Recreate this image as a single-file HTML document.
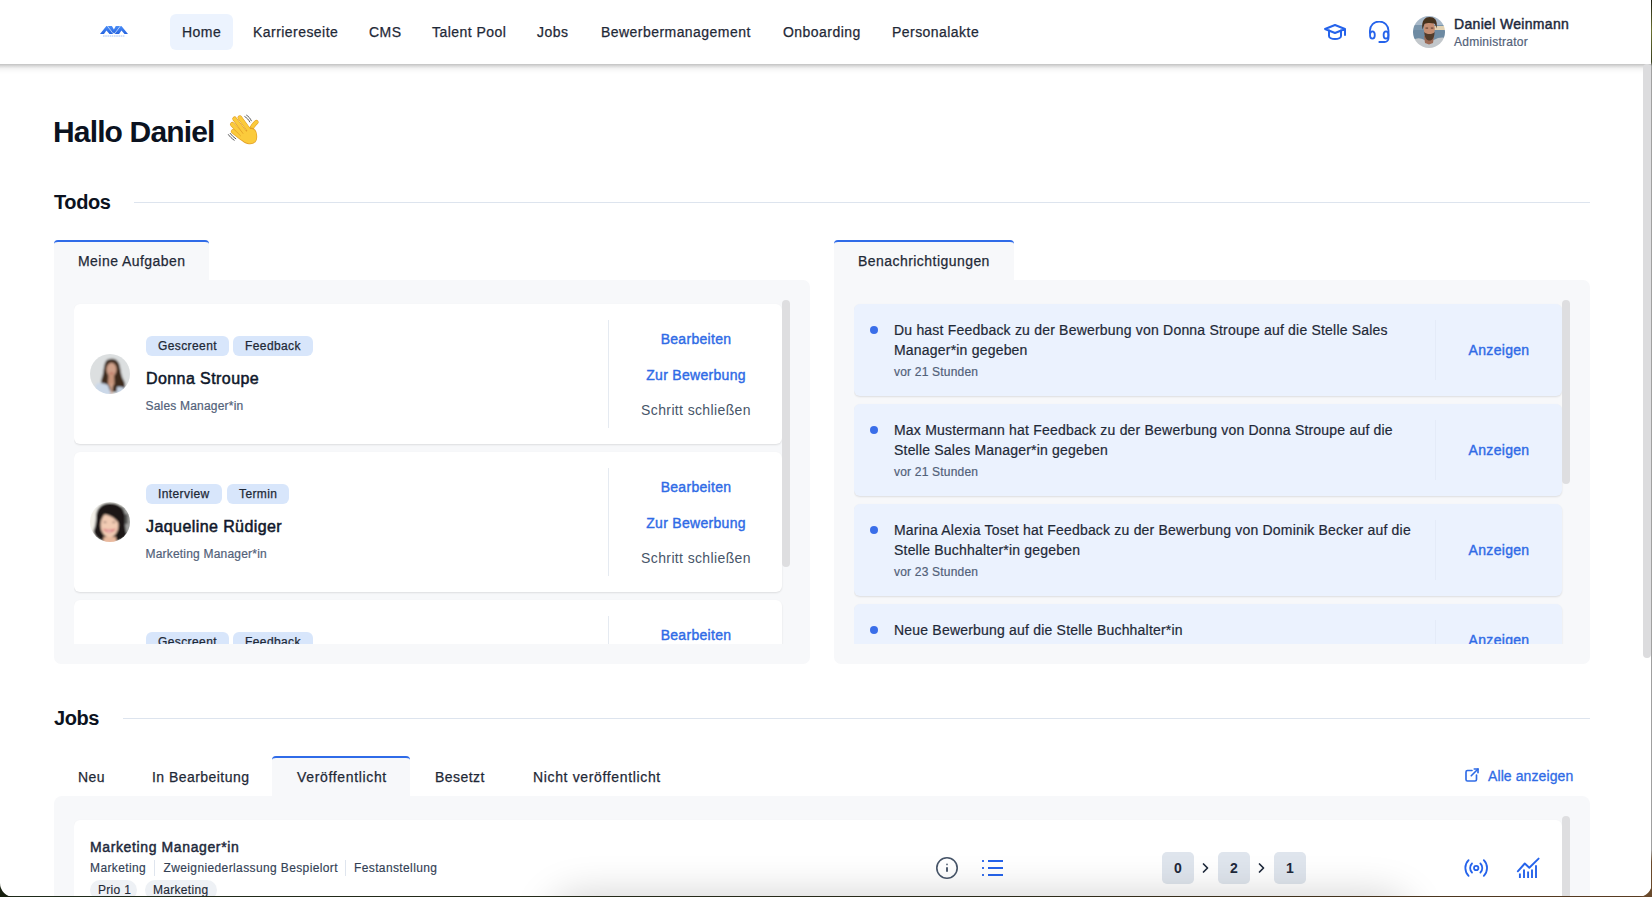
<!DOCTYPE html>
<html><head><meta charset="utf-8">
<style>
*{box-sizing:border-box;margin:0;padding:0}
html,body{width:1652px;height:897px;overflow:hidden;background:#fff}
body{position:relative;font-family:"Liberation Sans",sans-serif;color:#1e293b}
.abs{position:absolute}
.t{position:absolute;white-space:nowrap;line-height:1}
/* header */
#hdr{position:absolute;left:0;top:0;width:1651px;height:64px;background:#fff;z-index:5}
#hsh{position:absolute;left:0;top:64px;width:1651px;height:10px;z-index:5;background:linear-gradient(180deg,rgba(0,0,0,.24) 0,rgba(0,0,0,.17) 1.5px,rgba(0,0,0,.1) 3px,rgba(0,0,0,.05) 4.5px,rgba(0,0,0,.025) 6.5px,rgba(0,0,0,.01) 8px,rgba(0,0,0,0) 10px)}
.nav{position:absolute;top:14px;height:36px;font-size:14px;color:#1f2937;line-height:36px;padding:0 12px;border-radius:6px;letter-spacing:.45px;white-space:nowrap;-webkit-text-stroke:.25px #1f2937}
.nav.on{background:#ecf3fe}
/* headings */
.h2{position:absolute;font-size:20px;font-weight:700;color:#0b1220;letter-spacing:-.4px;line-height:1}
.rule{position:absolute;height:1px;background:#dde4ee}
/* tabs */
.tab{position:absolute;height:40px;font-size:14px;color:#1f2937;line-height:42px;letter-spacing:.45px;white-space:nowrap;-webkit-text-stroke:.25px #1f2937}
.tab.on{background:#f7f8fa;border-top:2px solid #2f6be8;border-radius:4px 4px 0 0;line-height:39px}
.panel{position:absolute;background:#f7f8fa;border-radius:0 7px 7px 7px}
.clip{position:absolute;overflow:hidden}
.card{position:absolute;background:#fff;border-radius:6px;box-shadow:0 1px 2px rgba(0,0,0,.11)}
.sb{position:absolute;width:8px;background:#dedee0;border-radius:4px}
.badge{position:absolute;height:20px;border-radius:6px;background:#d8e6fb;font-size:12px;line-height:20px;color:#1f2937;padding:0 12px;white-space:nowrap;letter-spacing:.4px;-webkit-text-stroke:.25px #1f2937}
.name{position:absolute;font-size:16px;font-weight:400;color:#0f172a;white-space:nowrap;line-height:1;letter-spacing:.42px;-webkit-text-stroke:.5px #0f172a}
.sub{position:absolute;font-size:12px;color:#526179;white-space:nowrap;line-height:1;letter-spacing:.2px;-webkit-text-stroke:.2px #526179}
.vdiv{position:absolute;width:1px;background:#e5eaf1}
.act{position:absolute;font-size:14px;white-space:nowrap;line-height:1;text-align:center;width:174px}
.blue{color:#2f6be6;font-weight:400;letter-spacing:.3px;-webkit-text-stroke:.4px #2f6be6}
.gray{color:#475569;letter-spacing:.37px}
.notif{position:absolute;background:#ebf2fe;border-radius:6px;box-shadow:0 1px 2px rgba(0,0,0,.11)}
.dot{position:absolute;width:8px;height:8px;border-radius:50%;background:#3a6ee9}
.ntext{position:absolute;font-size:14px;color:#1f2937;line-height:20px;white-space:nowrap;letter-spacing:.2px;-webkit-text-stroke:.2px #1f2937}
.ntime{position:absolute;font-size:12px;color:#526179;white-space:nowrap;line-height:1;letter-spacing:.2px;-webkit-text-stroke:.2px #526179}
</style></head>
<body>

<div id="hsh"></div>
<div id="hdr">
  <svg class="abs" style="left:100px;top:26px" width="29" height="12" viewBox="0 0 29 12">
    <defs><linearGradient id="lg" x1="0" y1="0" x2="0" y2="1"><stop offset="0" stop-color="#4b8ef7"/><stop offset="1" stop-color="#2563e0"/></linearGradient></defs>
    <path d="M0 8 L6.4 0 L11.9 0 L13.9 3.4 L15.8 0 L21.4 0 L28 8 L24.5 8 L21.4 4.6 L19.1 8 L15 8 L13.9 6.4 L12.9 8 L9.5 8 L6.4 4.6 L4 8Z" fill="url(#lg)"/>
    <path d="M7.4 0 L13.2 7.8 M20.4 0 L14.6 7.8" stroke="#fff" stroke-width=".7" opacity=".85"/>
    <path d="M3 10 H25" stroke="#8db2f2" stroke-width="1.2" stroke-dasharray="1.6 .6" opacity=".8"/>
  </svg>
  <div class="nav on" style="left:170px">Home</div>
  <div class="nav" style="left:241px">Karriereseite</div>
  <div class="nav" style="left:357px">CMS</div>
  <div class="nav" style="left:420px">Talent Pool</div>
  <div class="nav" style="left:525px">Jobs</div>
  <div class="nav" style="left:589px">Bewerbermanagement</div>
  <div class="nav" style="left:771px">Onboarding</div>
  <div class="nav" style="left:880px">Personalakte</div>
</div>

<!-- title -->
<div class="t" style="left:53px;top:116.5px;font-size:30px;font-weight:700;color:#0b1220;letter-spacing:-.85px">Hallo Daniel</div>

<!-- Todos -->
<div class="h2" style="left:54px;top:192px">Todos</div>
<div class="rule" style="left:134px;top:202px;width:1456px"></div>

<div class="tab on" style="left:54px;top:240px;width:155px;padding-left:24px">Meine Aufgaben</div>
<div class="panel" style="left:54px;top:280px;width:756px;height:384px"></div>

<div class="tab on" style="left:834px;top:240px;width:180px;padding-left:24px">Benachrichtigungen</div>
<div class="panel" style="left:834px;top:280px;width:756px;height:384px"></div>


<!-- header right -->
<svg class="abs" style="left:1323px;top:20px;z-index:6" width="24" height="24" viewBox="0 0 24 24" fill="none" stroke="#2563eb" stroke-width="2" stroke-linecap="round" stroke-linejoin="round"><path d="M22 9l-10 -4l-10 4l10 4l10 -4v6"/><path d="M6 10.6v5.4a6 3 0 0 0 12 0v-5.4"/></svg>
<svg class="abs" style="left:1367px;top:21px;z-index:6" width="24" height="24" viewBox="0 0 24 24" fill="none" stroke="#2563eb" stroke-width="1.8" stroke-linecap="round" stroke-linejoin="round"><path d="M2.9 12v-2.2a9.3 9.3 0 0 1 18.6 0v7.2a4 4 0 0 1 -4 4h-5.2"/><ellipse cx="5.4" cy="14" rx="2.4" ry="3.6"/><ellipse cx="19" cy="14" rx="2.4" ry="3.6"/></svg>
<svg class="abs" style="left:1413px;top:16px;z-index:6" width="32" height="32" viewBox="0 0 32 32">
  <defs><clipPath id="cd"><circle cx="16" cy="16" r="16"/></clipPath><filter id="bd" x="-20%" y="-20%" width="140%" height="140%"><feGaussianBlur stdDeviation="0.5"/></filter></defs>
  <g clip-path="url(#cd)"><g filter="url(#bd)">
    <rect x="-2" y="-2" width="36" height="36" fill="#7a95ab"/>
    <rect x="-2" y="-2" width="36" height="11" fill="#a7b8c8"/>
    <rect x="18" y="10" width="16" height="4" fill="#e2d2b2"/>
    <rect x="-2" y="14" width="36" height="9" fill="#6d8aa2"/>
    <path d="M-2 25 C4 21 8 22 11 24 L21 24 C25 21 30 21 34 22 L34 34 L-2 34Z" fill="#c2c7cb"/>
    <path d="M11 20 L21 20 L20 27 L16 28.5 L12 27Z" fill="#9c6a55"/>
    <ellipse cx="16.3" cy="12.5" rx="5.6" ry="8" fill="#c48e72"/>
    <path d="M9.5 13.5 C8 4 12.5 1 16.5 1 C21.5 1 25 4 23.5 12.5 C22.8 9.5 22.2 8 21 7.5 C18 6.8 14 6.8 11.8 7.8 C11 9 10.4 11 9.5 13.5Z" fill="#45301f"/>
    <path d="M11.3 16 C11.5 22 13.8 24.5 16.5 24.5 C19.2 24.5 21.5 22 21.6 16 C19.5 18.8 13.5 18.8 11.3 16Z" fill="#513a2c"/>
    <rect x="12.5" y="11.5" width="2.6" height="1.2" fill="#6b4634"/><rect x="17.8" y="11.5" width="2.6" height="1.2" fill="#6b4634"/>
  </g></g>
</svg>
<div class="t" style="left:1454px;top:17px;font-size:14px;font-weight:400;color:#1e293b;z-index:6;letter-spacing:.33px;-webkit-text-stroke:.45px #1e293b">Daniel Weinmann</div>
<div class="t" style="left:1454px;top:35.5px;font-size:12px;color:#526179;z-index:6;letter-spacing:.25px;-webkit-text-stroke:.2px #526179">Administrator</div>

<!-- wave emoji -->
<svg class="abs" style="left:222px;top:108px" width="42" height="42" viewBox="0 0 42 42" stroke-linecap="round" stroke-linejoin="round">
  <path d="M34.3 14.2 C32 16 30 19 28.5 22.5" stroke="#e3a028" stroke-width="4.5" fill="none"/>
  <path d="M34.3 14.2 C32 16 30 19 28.5 22.5" stroke="#fbcb3c" stroke-width="3.4" fill="none"/>
  <path d="M17 25 L28 19.5 C33 19 35.2 24 35.2 29 C35.2 34 31.5 36.8 27 36.3 C22.5 35.8 19 32.5 15.5 28Z" fill="#e3a028"/>
  <path d="M11.2 23.4 L19.5 30" stroke="#e3a028" stroke-width="4.6" fill="none"/><path d="M11.2 23.4 L19.5 30" stroke="#fbcb3c" stroke-width="3.5" fill="none"/>
  <path d="M10.3 16.3 L20.5 27" stroke="#e3a028" stroke-width="4.6" fill="none"/><path d="M10.3 16.3 L20.5 27" stroke="#fbcb3c" stroke-width="3.5" fill="none"/>
  <path d="M12.6 10.8 L22.5 24" stroke="#e3a028" stroke-width="4.6" fill="none"/><path d="M12.6 10.8 L22.5 24" stroke="#fbcb3c" stroke-width="3.5" fill="none"/>
  <path d="M17.8 9.6 L26.5 21.5" stroke="#e3a028" stroke-width="4.6" fill="none"/><path d="M17.8 9.6 L26.5 21.5" stroke="#fbcb3c" stroke-width="3.5" fill="none"/>
  <path d="M19 27 L28.5 21 C32.5 20.5 34.5 24 34.5 29 C34.5 33.5 31 36 27 35.5 C23.5 35 21 33 18.5 30.5Z" fill="#fbcb3c"/>
  <path d="M22.8 8.6 C24.8 9.8 26.6 11.6 27.8 14" stroke="#5a5a5a" stroke-width="1" fill="none"/>
  <path d="M24.6 7.2 C26.6 8.5 28.4 10.4 29.3 12.8" stroke="#5a5a5a" stroke-width="1" fill="none"/>
  <path d="M6.4 26.6 C7.8 28.6 9.8 30.6 12.2 32.2" stroke="#5a5a5a" stroke-width="1" fill="none"/>
  <path d="M8.2 25.4 C9.6 27.4 11.6 29.4 13.8 30.8" stroke="#5a5a5a" stroke-width="1" fill="none"/>
</svg>

<!-- Aufgaben list -->
<div class="clip" style="left:74px;top:300px;width:716px;height:344px">
  <!-- card 1 -->
  <div class="card" style="left:0;top:4px;width:708px;height:140px"></div>
  <div class="card" style="left:0;top:152px;width:708px;height:140px"></div>
  <div class="card" style="left:0;top:300px;width:708px;height:140px"></div>
  <div class="sb" style="left:708px;top:0;height:267px"></div>
</div>
<div class="clip" style="left:74px;top:300px;width:708px;height:344px">
  <!-- card 1 content (origin card top-left = 0,4) -->
  <svg class="abs" style="left:16px;top:54px" width="40" height="40" viewBox="0 0 40 40">
  <defs><clipPath id="c1"><circle cx="20" cy="20" r="20"/></clipPath><filter id="b1" x="-20%" y="-20%" width="140%" height="140%"><feGaussianBlur stdDeviation="0.8"/></filter></defs>
  <g clip-path="url(#c1)"><g filter="url(#b1)">
    <rect x="-2" y="-2" width="44" height="44" fill="#dcdfe0"/>
    <path d="M17 6 C22 3.5 28 5 29.5 11 C31 17 31 22 34 27 C36 31 35.5 36 31 38 L22 38 L14 36 C10 33 10.5 27 12.5 22 C14 17 13.5 9 17 6Z" fill="#3e2a1f"/>
    <ellipse cx="21.5" cy="15.5" rx="5" ry="6.8" fill="#d0a18a"/>
    <path d="M18.5 20 L24 20 L24.5 30 L21 34 L18 30Z" fill="#c8957c"/>
    <path d="M19.5 18.8 Q21.5 20 23.5 18.8" stroke="#b7524a" stroke-width="1" fill="none"/>
    <path d="M6 30 C10 28 14 29 18 31 L22 42 L4 42Z" fill="#cbd8e8"/>
    <path d="M27 33 C30 32 34 33 37 36 L38 42 L26 42Z" fill="#c6d3e3"/>
    <path d="M20 30 L23 30 L22 42 L21 42Z" fill="#d4a890"/>
  </g></g>
</svg>
<div class="badge" style="left:72px;top:36px">Gescreent</div>
  <div class="badge" style="left:159px;top:36px">Feedback</div>
  <div class="name" style="left:72px;top:70.8px">Donna Stroupe</div>
  <div class="sub" style="left:71.5px;top:99.5px">Sales Manager*in</div>
  <div class="vdiv" style="left:534px;top:20px;height:108px"></div>
  <div class="act blue" style="left:535px;top:31.7px">Bearbeiten</div>
  <div class="act blue" style="left:535px;top:67.5px">Zur Bewerbung</div>
  <div class="act gray" style="left:535px;top:103.2px">Schritt schließen</div>

  <!-- card 2 content (+148) -->
  <svg class="abs" style="left:16px;top:202px" width="40" height="40" viewBox="0 0 40 40">
  <defs><clipPath id="c2"><circle cx="20" cy="20" r="20"/></clipPath><filter id="b2" x="-20%" y="-20%" width="140%" height="140%"><feGaussianBlur stdDeviation="0.9"/></filter></defs>
  <g clip-path="url(#c2)"><g filter="url(#b2)">
    <rect x="-2" y="-2" width="44" height="44" fill="#ecebe6"/>
    <rect x="31" y="4" width="11" height="34" fill="#a4a5a3"/>
    <rect x="33" y="12" width="5" height="10" fill="#5a5a58"/>
    <rect x="-2" y="8" width="8" height="26" fill="#f4f1ea"/>
    <path d="M6 16 C6 5 13 1 20 1 C28 1 35 5 35 15 C35 22 35 28 37 33 C34 37 30 39 26 39 L13 39 C8 38 4 34 3.5 29 C5 25 6 21 6 16Z" fill="#1d1816"/>
    <ellipse cx="19.5" cy="23" rx="9" ry="12.5" fill="#f2cbb3"/>
    <path d="M9.5 13 C11 7 17 5 22 6 C27 7 30 11 30 17 L30 24 C28 19 24 15.5 19 13.5 C15 12 11.5 12 9.5 13Z" fill="#1d1816"/>
    <path d="M14.3 27.6 Q19.3 33 24.5 27.6 Q19.3 29.2 14.3 27.6Z" fill="#fff" stroke="#d9737b" stroke-width="1.1"/>
    <ellipse cx="15" cy="20.3" rx="1.6" ry=".7" fill="#8a6a60"/><ellipse cx="23.8" cy="20.3" rx="1.6" ry=".7" fill="#8a6a60"/>
    <path d="M13.5 35 L26 35 L26.5 42 L13 42Z" fill="#e9b99e"/>
  </g></g>
</svg>
<div class="badge" style="left:72px;top:184px">Interview</div>
  <div class="badge" style="left:153px;top:184px">Termin</div>
  <div class="name" style="left:72px;top:218.8px">Jaqueline Rüdiger</div>
  <div class="sub" style="left:71.5px;top:247.5px">Marketing Manager*in</div>
  <div class="vdiv" style="left:534px;top:168px;height:108px"></div>
  <div class="act blue" style="left:535px;top:179.7px">Bearbeiten</div>
  <div class="act blue" style="left:535px;top:215.5px">Zur Bewerbung</div>
  <div class="act gray" style="left:535px;top:251.2px">Schritt schließen</div>

  <!-- card 3 content (+296) -->
  <div class="badge" style="left:72px;top:332px">Gescreent</div>
  <div class="badge" style="left:159px;top:332px">Feedback</div>
  <div class="vdiv" style="left:534px;top:316px;height:108px"></div>
  <div class="act blue" style="left:535px;top:327.7px">Bearbeiten</div>
</div>

<!-- notifications -->
<div class="clip" style="left:854px;top:300px;width:716px;height:344px">
  <div class="notif" style="left:0;top:4px;width:708px;height:92px"></div>
  <div class="notif" style="left:0;top:104px;width:708px;height:92px"></div>
  <div class="notif" style="left:0;top:204px;width:708px;height:92px"></div>
  <div class="notif" style="left:0;top:304px;width:708px;height:72px"></div>
  <div class="sb" style="left:708px;top:0;height:184px"></div>

  <div class="dot" style="left:16px;top:26px"></div>
  <div class="ntext" style="left:40px;top:20.4px">Du hast Feedback zu der Bewerbung von Donna Stroupe auf die Stelle Sales<br>Manager*in gegeben</div>
  <div class="ntime" style="left:40px;top:65.8px">vor 21 Stunden</div>
  <div class="vdiv" style="left:581px;top:20px;height:60px;background:#e4ebf8"></div>
  <div class="act blue" style="left:582px;top:43.3px;width:126px">Anzeigen</div>

  <div class="dot" style="left:16px;top:126px"></div>
  <div class="ntext" style="left:40px;top:120.4px">Max Mustermann hat Feedback zu der Bewerbung von Donna Stroupe auf die<br>Stelle Sales Manager*in gegeben</div>
  <div class="ntime" style="left:40px;top:165.8px">vor 21 Stunden</div>
  <div class="vdiv" style="left:581px;top:120px;height:60px;background:#e4ebf8"></div>
  <div class="act blue" style="left:582px;top:143.3px;width:126px">Anzeigen</div>

  <div class="dot" style="left:16px;top:226px"></div>
  <div class="ntext" style="left:40px;top:220.4px">Marina Alexia Toset hat Feedback zu der Bewerbung von Dominik Becker auf die<br>Stelle Buchhalter*in gegeben</div>
  <div class="ntime" style="left:40px;top:265.8px">vor 23 Stunden</div>
  <div class="vdiv" style="left:581px;top:220px;height:60px;background:#e4ebf8"></div>
  <div class="act blue" style="left:582px;top:243.3px;width:126px">Anzeigen</div>

  <div class="dot" style="left:16px;top:326px"></div>
  <div class="ntext" style="left:40px;top:320.4px">Neue Bewerbung auf die Stelle Buchhalter*in</div>
  <div class="vdiv" style="left:581px;top:320px;height:40px;background:#e4ebf8"></div>
  <div class="act blue" style="left:582px;top:333.3px;width:126px">Anzeigen</div>
</div>

<!-- Jobs -->
<div class="h2" style="left:54px;top:708px">Jobs</div>
<div class="rule" style="left:123px;top:718px;width:1467px"></div>


<div class="tab" style="left:54px;top:756px;width:74px;padding-left:24px">Neu</div>
<div class="tab" style="left:128px;top:756px;width:144px;padding-left:24px">In Bearbeitung</div>
<div class="tab on" style="left:272px;top:756px;width:138px;padding-left:25px;letter-spacing:.66px">Veröffentlicht</div>
<div class="tab" style="left:410px;top:756px;width:98px;padding-left:25px">Besetzt</div>
<div class="tab" style="left:508px;top:756px;width:176px;padding-left:25px;letter-spacing:.65px">Nicht veröffentlicht</div>

<svg class="abs" style="left:1463px;top:766px" width="18" height="18" viewBox="0 0 24 24" fill="none" stroke="#2f6be6" stroke-width="2.2" stroke-linecap="round" stroke-linejoin="round"><path d="M12 6h-6a2 2 0 0 0 -2 2v10a2 2 0 0 0 2 2h10a2 2 0 0 0 2 -2v-6"/><path d="M11 13l9 -9"/><path d="M15 4h5v5"/></svg>
<div class="t" style="left:1488px;top:769.4px;font-size:14px;color:#2f6be6;letter-spacing:.1px;-webkit-text-stroke:.3px #2f6be6">Alle anzeigen</div>

<div class="panel" style="left:54px;top:796px;width:1536px;height:140px;border-radius:8px"></div>
<div class="clip" style="left:74px;top:816px;width:1496px;height:100px">
  <div class="card" style="left:0;top:4px;width:1488px;height:120px"></div>
  <div class="sb" style="left:1488px;top:0;height:120px"></div>
  <div class="t" style="left:16px;top:23.7px;font-size:14px;font-weight:400;color:#1e293b;letter-spacing:.62px;-webkit-text-stroke:.45px #1e293b">Marketing Manager*in</div>
  <div class="t" style="left:16px;top:45.7px;font-size:12px;color:#334155;letter-spacing:.38px;-webkit-text-stroke:.15px #334155">Marketing</div>
  <div class="vdiv" style="left:80px;top:44px;height:16px;background:#dfe5ee"></div>
  <div class="t" style="left:89.5px;top:45.7px;font-size:12px;color:#334155;letter-spacing:.38px;-webkit-text-stroke:.15px #334155">Zweigniederlassung Bespielort</div>
  <div class="vdiv" style="left:271px;top:44px;height:16px;background:#dfe5ee"></div>
  <div class="t" style="left:280px;top:45.7px;font-size:12px;color:#334155;letter-spacing:.38px;-webkit-text-stroke:.15px #334155">Festanstellung</div>
  <div class="abs" style="left:16px;top:64px;width:47px;height:20px;border-radius:10px;background:#eef1f5;font-size:12px;line-height:20px;color:#1f2937;padding-left:8px;white-space:nowrap;letter-spacing:.3px;-webkit-text-stroke:.15px #1f2937">Prio 1</div>
  <div class="abs" style="left:71px;top:64px;width:72px;height:20px;border-radius:10px;background:#eef1f5;font-size:12px;line-height:20px;color:#1f2937;padding-left:8px;white-space:nowrap;letter-spacing:.3px;-webkit-text-stroke:.15px #1f2937">Marketing</div>

  <svg class="abs" style="left:861px;top:40px" width="24" height="24" viewBox="0 0 24 24" fill="none" stroke="#475569" stroke-width="1.6" stroke-linecap="round"><circle cx="12" cy="12" r="10.2"/><path d="M12 8.2v.4"/><path d="M12 11.2v4.6" stroke-width="1.9" stroke-linecap="butt"/></svg>
  <svg class="abs" style="left:906px;top:40px" width="24" height="24" viewBox="0 0 24 24" fill="none" stroke="#2563eb" stroke-width="1.8"><path d="M8 5h15M8 12h15M8 19h15"/><path d="M3 4.1v1.8M3 11.1v1.8M3 18.1v1.8"/></svg>

  <div class="abs" style="left:1088px;top:36px;width:32px;height:32px;border-radius:5px;background:#dfe5ed;font-size:14px;font-weight:700;color:#1e293b;text-align:center;line-height:32px">0</div>
  <svg class="abs" style="left:1126px;top:45px" width="12" height="14" viewBox="0 0 12 14" fill="none" stroke="#1e293b" stroke-width="1.7" stroke-linecap="round" stroke-linejoin="round"><path d="M3.5 3l4 4l-4 4"/></svg>
  <div class="abs" style="left:1144px;top:36px;width:32px;height:32px;border-radius:5px;background:#dfe5ed;font-size:14px;font-weight:700;color:#1e293b;text-align:center;line-height:32px">2</div>
  <svg class="abs" style="left:1182px;top:45px" width="12" height="14" viewBox="0 0 12 14" fill="none" stroke="#1e293b" stroke-width="1.7" stroke-linecap="round" stroke-linejoin="round"><path d="M3.5 3l4 4l-4 4"/></svg>
  <div class="abs" style="left:1200px;top:36px;width:32px;height:32px;border-radius:5px;background:#dfe5ed;font-size:14px;font-weight:700;color:#1e293b;text-align:center;line-height:32px">1</div>

  <svg class="abs" style="left:1390px;top:42px" width="24" height="20" viewBox="0 0 24 20" fill="none" stroke="#2563eb" stroke-width="1.8" stroke-linecap="round"><circle cx="12.2" cy="10" r="2.2"/><path d="M8 5.5a6.3 6.3 0 0 0 0 9"/><path d="M16.4 5.5a6.3 6.3 0 0 1 0 9"/><path d="M4.6 2.2a11 11 0 0 0 0 15.6"/><path d="M19.8 2.2a11 11 0 0 1 0 15.6"/></svg>
  <svg class="abs" style="left:1440px;top:40px" width="26" height="24" viewBox="0 0 26 24" fill="none" stroke="#2563eb" stroke-width="1.9" stroke-linecap="round" stroke-linejoin="round"><path d="M3.8 15.3l7 -7.8l4.5 4.2l9.3 -9.1"/><path d="M5.9 22v-4.5M10 22v-8.5M14.1 22v-6.4M18 22v-8.5M22 22v-12.7" stroke-linecap="butt"/></svg>
</div>

<!-- page scrollbar -->
<div class="abs" style="left:1643px;top:64px;width:8px;height:594px;border-radius:4px;background:#dcdcde;z-index:7"></div>
<!-- bottom shadow -->
<div class="abs" style="left:560px;top:905px;width:840px;height:40px;border-radius:20px;box-shadow:0 0 40px 10px rgba(0,0,0,.18);z-index:8"></div>
<!-- window frame -->
<div class="abs" style="left:1651px;top:0;width:1px;height:897px;background:linear-gradient(180deg,#1c1c10 0,#6a7030 30px,#3a4020 62px,#a0a0a0 66px,#a0a0a0 850px,#6a4a2c 862px,#6a4a2c 897px);z-index:10"></div>
<div class="abs" style="left:0;top:896px;width:1652px;height:1px;background:linear-gradient(90deg,#1e2a1a,#2a2a1a 60%,#5a3c22);z-index:10"></div>

<svg class="abs" style="left:0;top:883px;z-index:10" width="14" height="14" viewBox="0 0 14 14"><path d="M0 0 A14 14 0 0 0 14 14 L0 14Z" fill="#18200f"/></svg>
<svg class="abs" style="left:1638px;top:883px;z-index:10" width="14" height="14" viewBox="0 0 14 14"><path d="M14 0 A14 14 0 0 1 0 14 L14 14Z" fill="#6a4a2c"/></svg>
</body></html>
